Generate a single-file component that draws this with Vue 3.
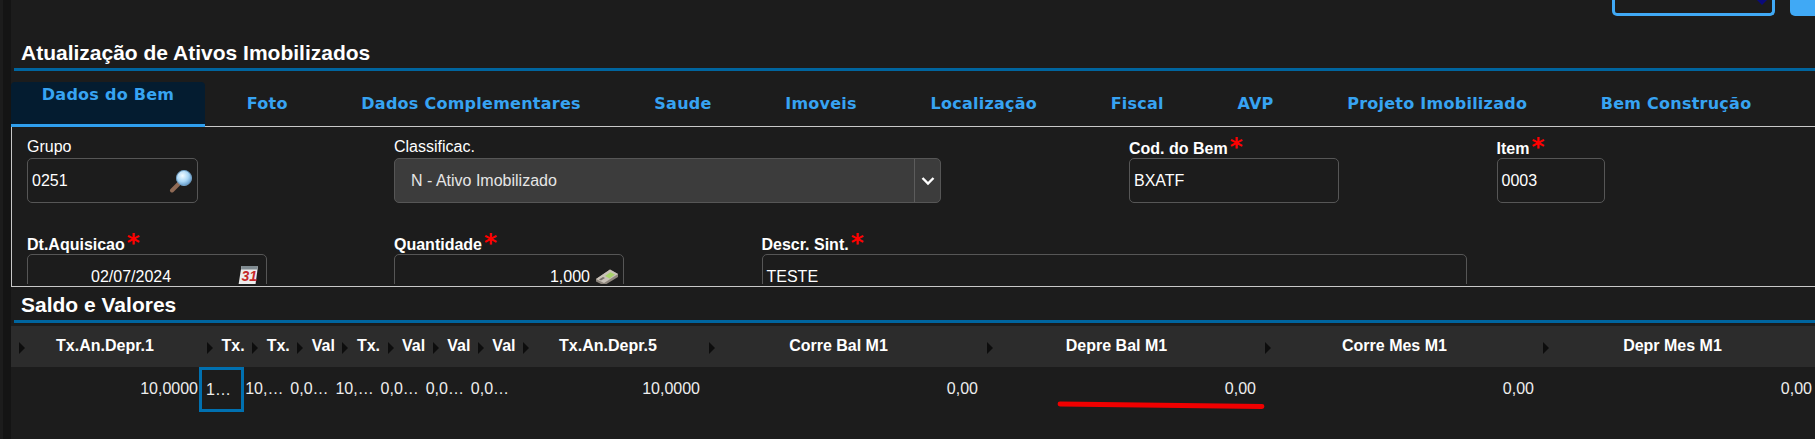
<script setup>
const tabs = ['Foto', 'Dados Complementares', 'Saude', 'Imoveis', 'Localização', 'Fiscal', 'AVP', 'Projeto Imobilizado', 'Bem Construção']
const columns = [
  { id: 1, head: 'Tx.An.Depr.1', value: '10,0000', kind: 'wide' },
  { id: 2, head: 'Tx.', value: '1…', kind: 'narrow', focus: true },
  { id: 3, head: 'Tx.', value: '10,…', kind: 'narrow' },
  { id: 4, head: 'Val', value: '0,0…', kind: 'narrow' },
  { id: 5, head: 'Tx.', value: '10,…', kind: 'narrow' },
  { id: 6, head: 'Val', value: '0,0…', kind: 'narrow' },
  { id: 7, head: 'Val', value: '0,0…', kind: 'narrow' },
  { id: 8, head: 'Val', value: '0,0…', kind: 'narrow' },
  { id: 9, head: 'Tx.An.Depr.5', value: '10,0000', kind: 'wide' },
  { id: 10, head: 'Corre Bal M1', value: '0,00', kind: 'wide money-col' },
  { id: 11, head: 'Depre Bal M1', value: '0,00', kind: 'wide money-col' },
  { id: 12, head: 'Corre Mes M1', value: '0,00', kind: 'wide money-col' },
  { id: 13, head: 'Depr Mes M1', value: '0,00', kind: 'wide money-col' }
]
</script>

<template>
  <div class="page">
    <aside class="strip"></aside>
    <main class="main">
      <div class="topbar">
        <div class="outline-btn"><span class="mini-arrow"></span></div>
        <div class="solid-btn"></div>
      </div>

      <h2 class="section-title first">Atualização de Ativos Imobilizados</h2>

      <nav class="tabs">
        <div class="tab active">Dados do Bem</div>
        <div v-for="t in tabs" :key="t" class="tab">{{ t }}</div>
      </nav>

      <section class="panel">
        <div class="panel-inner">
          <div class="form-grid">
            <div class="field">
              <label class="plain">Grupo</label>
              <div class="input w-grupo">
                <span>0251</span>
                <svg class="ico" width="24" height="24" viewBox="0 0 24 24">
                  <defs>
                    <radialGradient id="lens" cx="0.4" cy="0.35" r="0.7">
                      <stop offset="0" stop-color="#f2fbff" />
                      <stop offset="0.55" stop-color="#a9d6f5" />
                      <stop offset="1" stop-color="#5c93c4" />
                    </radialGradient>
                  </defs>
                  <path d="M3 21.5 L10.5 14" stroke="#8f6a55" stroke-width="4" stroke-linecap="round" />
                  <circle cx="15" cy="9" r="7.6" fill="url(#lens)" stroke="#6f9cc0" stroke-width="1" />
                </svg>
              </div>
            </div>
            <div class="field c-class">
              <label class="plain">Classificac.</label>
              <div class="select">
                <span class="select-text">N - Ativo Imobilizado</span>
                <span class="select-arrow">
                  <svg width="14" height="10" viewBox="0 0 14 10"><path d="M1.5 2 L7 7.5 L12.5 2" fill="none" stroke="#fff" stroke-width="2.4" /></svg>
                </span>
              </div>
            </div>
            <div class="field c4">
              <label>Cod. do Bem<em>*</em></label>
              <div class="input w-cod"><span>BXATF</span></div>
            </div>
            <div class="field c5">
              <label>Item<em>*</em></label>
              <div class="input w-item"><span>0003</span></div>
            </div>

            <div class="field c1">
              <label>Dt.Aquisicao<em>*</em></label>
              <div class="input w-date">
                <span class="date-text">02/07/2024</span>
                <svg class="ico cal" width="22" height="24" viewBox="0 0 22 24">
                  <path d="M4.5 1 H21 L18 23 H1 Z" fill="#ececec" />
                  <path d="M4.5 1 H21 L20.5 4.5 H4 Z" fill="#7f8a90" />
                  <path d="M1 23 H18 L18.3 21 H1.3 Z" fill="#9a9a9a" />
                  <text x="4.4" y="16" class="cal-num">31</text>
                </svg>
              </div>
            </div>
            <div class="field c2">
              <label>Quantidade<em>*</em></label>
              <div class="input w-qty">
                <span class="qty-text">1,000</span>
                <svg class="ico money" width="24" height="18" viewBox="0 0 24 18">
                  <path d="M1 11 L15 1.5 L23 6 L23 9 L9 17.5 L1 13.5 Z" fill="#8d857c" />
                  <path d="M1 11 L15 1.5 L23 6 L9 15 Z" fill="#c9c2b8" />
                  <path d="M10 8 L15.5 4.2 L20 6.6 L14.5 10.4 Z" fill="#a8d36a" />
                  <path d="M4 11.5 L8 9 L10 10 L6 12.6 Z" fill="#77706a" />
                </svg>
              </div>
            </div>
            <div class="field c3">
              <label>Descr. Sint.<em>*</em></label>
              <div class="input w-desc"><span>TESTE</span></div>
            </div>
          </div>
        </div>
      </section>

      <h2 class="section-title second">Saldo e Valores</h2>

      <div class="table">
        <div class="thead">
          <div v-for="c in columns" :key="c.id" class="th" :class="c.kind">
            <i class="tri"></i><span>{{ c.head }}</span>
          </div>
        </div>
        <div class="tbody">
          <div v-for="c in columns" :key="c.id" class="td" :class="[c.kind, { focus: c.focus }]">
            <span class="val">{{ c.value }}</span>
          </div>
        </div>
        <svg class="scribble" width="208" height="9" viewBox="0 0 208 9">
          <path d="M3 3 C60 3.5 130 4.5 205 5.5" fill="none" stroke="#f00000" stroke-width="4.8" stroke-linecap="round" />
        </svg>
      </div>
    </main>
  </div>
</template>

<style>
html, body { margin: 0; background: #1c1c1c; overflow: hidden; }
</style>

<style scoped>
.page {
  display: flex;
  width: 1815px;
  height: 439px;
  background: #1c1c1c;
  color: #fff;
  font-family: "Liberation Sans", Arial, sans-serif;
  font-size: 16px;
  overflow: hidden;
}
.strip {
  flex: 0 0 11px;
  background: linear-gradient(90deg, #1c1c1c 0 3px, #141414 3px);
}
.main {
  flex: 1;
  min-width: 0;
  display: flex;
  flex-direction: column;
}
.topbar {
  height: 16px;
  display: flex;
  justify-content: flex-end;
  gap: 15px;
  flex: none;
}
.outline-btn {
  width: 163px;
  height: 19px;
  margin-top: -3px;
  box-sizing: border-box;
  border: 3px solid #40a9f5;
  border-top: 0;
  border-radius: 0 0 5px 5px;
  display: flex;
  justify-content: flex-end;
}
.mini-arrow {
  width: 0;
  height: 0;
  margin-top: 3px;
  margin-right: 5px;
  border-left: 5px solid transparent;
  border-right: 5px solid transparent;
  border-top: 5px solid #0a0a7a;
}
.solid-btn {
  width: 25px;
  height: 16px;
  border-radius: 0 0 0 5px;
  background: #40a9f5;
}
.section-title {
  margin: 0 0 0 3px;
  padding-left: 7px;
  border-bottom: 3px solid #00659f;
  font-size: 21px;
  font-weight: 700;
  line-height: 24px;
  color: #fff;
  flex: none;
}
.section-title.first { padding-top: 25px; height: 27px; }
.section-title.second { padding-top: 6px; height: 27px; }

.tabs {
  flex: none;
  margin-top: 11px;
  height: 45px;
  box-sizing: border-box;
  border-bottom: 1px solid #c8c8c8;
  display: flex;
  font-family: "DejaVu Sans", Verdana, sans-serif;
  font-weight: 700;
  font-size: 16px;
  letter-spacing: 0.25px;
  line-height: 18px;
  color: #37a3f2;
}
.tab {
  padding: 13px 36.8px 0;
  white-space: nowrap;
}
.tab.active {
  width: 194px;
  height: 45px;
  box-sizing: border-box;
  padding: 4px 0 0;
  margin-right: 5px;
  text-align: center;
  background: #041c30;
  border-bottom: 3px solid #2f9fee;
  border-radius: 4px 4px 0 0;
}

.panel {
  flex: none;
  height: 160px;
  box-sizing: border-box;
  border-left: 1px solid #c8c8c8;
  border-bottom: 1px solid #c8c8c8;
  padding-bottom: 2px;
}
.panel-inner {
  height: 157px;
  overflow: hidden;
}
.form-grid {
  display: grid;
  grid-template-columns: 367px repeat(4, 367.5px);
  grid-template-rows: 65px 65px;
  row-gap: 31px;
  padding: 11px 0 0 15px;
  align-items: end;
}
.field {
  display: flex;
  flex-direction: column;
  align-items: flex-start;
  min-width: 0;
}
.c1 { grid-column: 1; }
.c2 { grid-column: 2; }
.c3 { grid-column: 3 / span 3; }
.c4 { grid-column: 4; }
.c5 { grid-column: 5; }
.c-class { grid-column: 2 / span 2; }
label {
  height: 18px;
  line-height: 18px;
  font-weight: 700;
  white-space: nowrap;
}
label.plain {
  font-weight: 400;
  margin-bottom: 2px;
}
label em {
  font-family: "DejaVu Sans", sans-serif;
  font-style: normal;
  font-weight: 700;
  font-size: 25px;
  color: #f00;
  line-height: 0;
  position: relative;
  top: 1px;
  margin-left: 2px;
}
.input {
  height: 45px;
  box-sizing: border-box;
  border: 1px solid #565656;
  border-radius: 5px;
  display: flex;
  align-items: center;
  padding: 0 4px;
  flex: none;
}
.w-grupo { width: 171px; justify-content: space-between; }
.w-cod { width: 210px; }
.w-item { width: 108px; }
.w-date { width: 240px; padding-left: 63px; }
.w-qty { width: 230px; justify-content: flex-end; }
.w-desc { width: 705px; }
.ico { flex: none; }
.w-date .ico { margin-left: auto; margin-right: 3px; }
.w-qty .ico { margin-left: 5px; }
.cal-num {
  font-family: "Liberation Sans", sans-serif;
  font-weight: 700;
  font-style: italic;
  font-size: 14px;
  fill: #c62828;
}
.select {
  width: 547px;
  height: 45px;
  box-sizing: border-box;
  border: 1px solid #565656;
  border-radius: 5px;
  background: #3c3c3c;
  display: flex;
  align-items: center;
  color: #e6e6e6;
}
.select-text { flex: 1; padding-left: 16px; }
.select-arrow {
  width: 25px;
  height: 100%;
  border-left: 1px solid #5c5c5c;
  display: flex;
  align-items: center;
  justify-content: center;
}

.table {
  position: relative;
  margin-top: 3px;
  flex: none;
}
.thead, .tbody {
  display: grid;
  grid-template-columns: 188px repeat(7, 45.15px) 186px repeat(4, 278px);
}
.thead {
  height: 41px;
  background: #2c2c2c;
  font-weight: 700;
  font-size: 16px;
  align-items: center;
}
.th {
  position: relative;
  min-width: 0;
  height: 100%;
  display: flex;
  align-items: center;
  justify-content: center;
  white-space: nowrap;
}
.th.narrow {
  justify-content: flex-start;
  padding-left: 22.5px;
  box-sizing: border-box;
}
.th.money-col { padding-right: 3px; box-sizing: border-box; }
.th span { padding-bottom: 2px; }
.tri {
  position: absolute;
  left: 8px;
  top: 16px;
  width: 0;
  height: 0;
  border-left: 6px solid #0d0d0d;
  border-top: 6px solid transparent;
  border-bottom: 6px solid transparent;
}
.tbody { height: 45px; }
.td {
  min-width: 0;
  height: 45px;
  box-sizing: border-box;
  display: flex;
  align-items: center;
  justify-content: flex-end;
  padding: 0 1px 2px 1px;
  color: #eee;
}
.td.narrow { justify-content: flex-start; }
.td.focus {
  border: 3px solid #0070b0;
  padding: 0 3px 0 4px;
}
.val { white-space: nowrap; }
.scribble {
  position: absolute;
  left: 1046px;
  top: 75px;
}
</style>
